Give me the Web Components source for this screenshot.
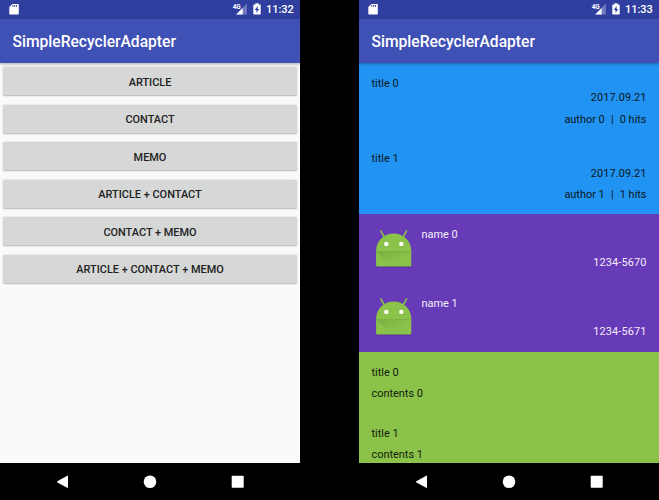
<!DOCTYPE html>
<html lang="en">
<head>
<meta charset="utf-8">
<title>SimpleRecyclerAdapter</title>
<style>
html,body{margin:0;height:100%;background:#000;overflow:hidden}
body{font-family:Roboto,"Noto Sans",sans-serif;display:flex;justify-content:space-between;--u:.78125px}
</style>
</head>
<body>
<device-screen time="11:32">
  <raised-button>ARTICLE</raised-button>
  <raised-button>CONTACT</raised-button>
  <raised-button>MEMO</raised-button>
  <raised-button>ARTICLE + CONTACT</raised-button>
  <raised-button>CONTACT + MEMO</raised-button>
  <raised-button>ARTICLE + CONTACT + MEMO</raised-button>
</device-screen>
<device-screen time="11:33">
  <article-item><span slot="title">title 0</span><span slot="date">2017.09.21</span><span slot="author">author 0</span><span slot="hits">0 hits</span></article-item>
  <article-item><span slot="title">title 1</span><span slot="date">2017.09.21</span><span slot="author">author 1</span><span slot="hits">1 hits</span></article-item>
  <contact-item><span slot="name">name 0</span><span slot="phone">1234-5670</span></contact-item>
  <contact-item><span slot="name">name 1</span><span slot="phone">1234-5671</span></contact-item>
  <memo-item><span slot="title">title 0</span><span slot="contents">contents 0</span></memo-item>
  <memo-item><span slot="title">title 1</span><span slot="contents">contents 1</span></memo-item>
</device-screen>
<script>
const define = (name, html, setup) => customElements.define(name, class extends HTMLElement {
  constructor() {
    super();
    this.attachShadow({mode: 'open'}).innerHTML = html;
  }
  connectedCallback() { if (setup) setup(this); }
});

define('status-bar', `
<style>
:host{display:flex;align-items:center;box-sizing:border-box;height:calc(24*var(--u));padding:0 6.2px 0 9px;background:#303f9f;color:#fff;font-size:11px;font-weight:500}
svg{display:block;flex:none}
.space{flex:1}
.net{margin-right:6px}
.bat{margin-right:5px}
.g{font-size:6.4px;font-weight:700;line-height:6px;align-self:flex-start;margin:4px -4.4px 0 0;letter-spacing:-.3px}
.time{padding-top:1.2px}
</style>
<svg width="10" height="12" viewBox="0 0 10 12"><path fill="#fff" d="M3.4.9H9q.8 0 .8.8v9q0 .8-.8.8H1.1q-.8 0-.8-.8V4z"/><path fill="#303f9f" d="M3.4 2.1h1v1.7h-1zM5.2 2.1h1v1.7h-1zM7 2.1h1v1.7H7z"/></svg>
<span class="space"></span>
<span class="g">4G</span>
<svg class="net" width="11" height="12" viewBox="0 0 11 12"><path fill="#fff" fill-opacity=".32" d="M10.8.8v10.7H.1z"/><path fill="#fff" d="M6.6 5v6.5H.1z"/></svg>
<svg class="bat" width="8" height="12" viewBox="0 0 8 12"><path fill="#fff" d="M2.4.2h3.2v1.2h1.3q.8 0 .8.8v8.6q0 .8-.8.8H1.1q-.8 0-.8-.8V2.2q0-.8.8-.8h1.3z"/><path fill="#303f9f" d="M4.6 3v3h1.6L3.5 10V7.1H1.8z"/></svg>
<span class="time"><slot></slot></span>`);

define('app-bar', `
<style>
:host{display:flex;align-items:center;box-sizing:border-box;height:calc(56*var(--u));padding:2px 0 0 calc(16*var(--u));background:#3f51b5;color:#fff;font-size:15.625px;font-weight:500;position:relative;z-index:1;box-shadow:0 1px 3px rgba(0,0,0,.34)}
</style><slot></slot>`);

define('nav-bar', `
<style>
:host{display:flex;align-items:center;height:calc(48*var(--u));background:#000;position:relative;z-index:1}
svg{display:block}
</style>
<svg width="300" height="37.5" viewBox="0 0 300 37.5" fill="#fff"><path d="M57.4 18.3 67.2 12.7q.8-.4.8.4v11.3q0 .8-.8.4L57.4 19.4q-.8-.5 0-1.1z"/><circle cx="150" cy="18.8" r="6.3"/><rect x="231.7" y="12.8" width="12" height="12" rx=".7"/></svg>`);

define('device-screen', `
<style>
:host{display:flex;flex-direction:column;width:300px;height:500px;background:#fafafa;overflow:hidden}
main{flex:1;min-height:0;overflow:hidden}
</style>
<status-bar></status-bar><app-bar>SimpleRecyclerAdapter</app-bar><main><slot></slot></main><nav-bar></nav-bar>`,
el => { el.shadowRoot.querySelector('status-bar').textContent = el.getAttribute('time'); });

define('raised-button', `
<style>
:host{display:block;box-sizing:border-box;height:calc(48*var(--u));padding:calc(6*var(--u)) calc(4*var(--u))}
button{all:unset;display:flex;box-sizing:border-box;width:100%;height:100%;padding-top:1.9px;align-items:center;justify-content:center;background:#d6d7d7;color:#212121;font-size:10.9375px;font-weight:500;border-radius:1.6px;box-shadow:0 .5px 1.6px rgba(0,0,0,.28)}
</style><button><slot></slot></button>`);

const row = 'font-size:10.9375px;line-height:calc(19*var(--u));padding:calc(16*var(--u));box-sizing:border-box;';
define('article-item', `
<style>
:host{display:block;${row}height:calc(97*var(--u));padding-top:14.1px;background:#2194f3;color:#0b1620}
.end{text-align:right;letter-spacing:.08px}
.meta{display:flex;justify-content:flex-end;margin-top:calc(8*var(--u))}
.bar{margin:0 6.2px}
</style>
<div><slot name="title"></slot></div>
<div class="end"><slot name="date"></slot></div>
<div class="meta"><slot name="author"></slot><span class="bar">|</span><slot name="hits"></slot></div>`);

define('android-icon', `
<style>:host{display:block;width:calc(56*var(--u));height:calc(56*var(--u))}svg{display:block;width:100%;height:100%}</style>
<svg viewBox="0.2 0 43.75 43.75">
<defs><linearGradient id="s" x1="0" y1="0" x2=".8" y2=".8"><stop offset="0" stop-color="#33691e" stop-opacity=".22"/><stop offset=".8" stop-color="#33691e" stop-opacity="0"/></linearGradient></defs>
<path d="M4.4 38.5v.8q0 1 1 1h33q1 0 1-1v-.8z" fill="#000" opacity=".2"/>
<path d="M9 4l3.8 6.5M34.8 4 31 10.5" stroke="#8bc34a" stroke-width="1.5" stroke-linecap="round"/>
<path fill="#8bc34a" d="M4.3 24.2C4.3 14 12 6.6 21.9 6.6S39.5 14 39.5 24.2v14.2q0 1.1-1.1 1.1h-33q-1.1 0-1.1-1.1z"/>
<path fill="url(#s)" d="M4.3 24.8h35.2v14.7H20.2z"/>
<path fill="#7cb342" d="M4.3 24h35.2v1.1H4.3z"/>
<circle cx="14.5" cy="16.9" r="2.2" fill="#fff"/><circle cx="29.5" cy="16.9" r="2.2" fill="#fff"/>
</svg>`);

define('contact-item', `
<style>
:host{display:flex;gap:calc(8*var(--u));${row}height:calc(88*var(--u));background:#673ab7;color:#f3effa}
.info{flex:1;display:flex;flex-direction:column;justify-content:space-between;margin:1.2px 0 -.3px}
.end{text-align:right;letter-spacing:.12px}
</style>
<android-icon></android-icon>
<div class="info"><div><slot name="name"></slot></div><div class="end"><slot name="phone"></slot></div></div>`);

define('memo-item', `
<style>
:host{display:flex;flex-direction:column;gap:calc(8*var(--u));${row}height:calc(78*var(--u));padding-top:14.3px;background:#8bc34a;color:#141c0c}
</style>
<div><slot name="title"></slot></div><div><slot name="contents"></slot></div>`);
</script>
</body>
</html>
